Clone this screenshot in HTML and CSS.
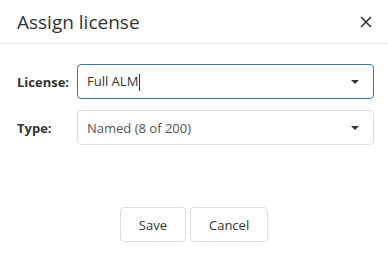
FILE: index.html
```html
<!DOCTYPE html>
<html lang="en">
<head>
    <meta charset="UTF-8">
    <title>Assign license</title>
    <link rel="stylesheet" href="styles.css">
</head>
<body>
    <div class="dialog">
        <div class="dialog-header">
            <h1 class="title">Assign license</h1>
            <button class="close" aria-label="Close">
                <svg width="12" height="12" viewBox="0 0 12 12">
                    <path d="M1 1L11 11M11 1L1 11" stroke="#333" stroke-width="1.6"/>
                </svg>
            </button>
        </div>
        <div class="dialog-body">
            <div class="field">
                <label class="label">License:</label>
                <div class="select focused">
                    <span class="value">Full ALM<span class="caret"></span></span>
                    <span class="arrow"></span>
                </div>
            </div>
            <div class="field">
                <label class="label">Type:</label>
                <div class="select">
                    <span class="value">Named (8 of 200)</span>
                    <span class="arrow"></span>
                </div>
            </div>
        </div>
        <div class="dialog-footer">
            <button class="btn">Save</button>
            <button class="btn">Cancel</button>
        </div>
    </div>
</body>
</html>
```
FILE: styles.css
```css
body {
    margin: 0;
    background: #FFFFFF;
    font-family: 'Open Sans', sans-serif;
    color: #333;
}
.dialog {
    width: 388px;
}
.dialog-header {
    display: flex;
    align-items: center;
    justify-content: space-between;
    height: 43px;
    padding: 0 16px 0 17px;
    border-bottom: 1px solid #E5E5E5;
}
.title {
    margin: 0;
    font-size: 19px;
    font-weight: normal;
    color: #333;
}
.close {
    border: none;
    background: none;
    padding: 0;
    width: 12px;
    height: 12px;
    display: flex;
}
.dialog-body {
    padding: 20px 14px 0 17px;
    display: flex;
    flex-direction: column;
    gap: 11px;
}
.field {
    display: flex;
    align-items: center;
}
.label {
    width: 60px;
    font-size: 13px;
    font-weight: bold;
    color: #333;
}
.select {
    flex: 1;
    height: 35px;
    box-sizing: border-box;
    border: 1px solid #DDDDDD;
    border-radius: 4px;
    display: flex;
    align-items: center;
    justify-content: space-between;
    padding: 0 14px 0 9px;
    font-size: 13px;
    color: #555;
}
.select.focused {
    border-color: #3A76B0;
    color: #333;
}
.caret {
    display: inline-block;
    width: 1px;
    height: 17px;
    background: #333;
    vertical-align: middle;
    margin-left: 1px;
}
.arrow {
    width: 0;
    height: 0;
    border-left: 4px solid transparent;
    border-right: 4px solid transparent;
    border-top: 4px solid #333;
}
.dialog-footer {
    display: flex;
    justify-content: center;
    gap: 4px;
    margin-top: 62px;
}
.btn {
    height: 35px;
    padding: 0 18px;
    font-family: 'Open Sans', sans-serif;
    font-size: 13px;
    color: #333;
    background: #FFFFFF;
    border: 1px solid #DDDDDD;
    border-radius: 4px;
}
```
